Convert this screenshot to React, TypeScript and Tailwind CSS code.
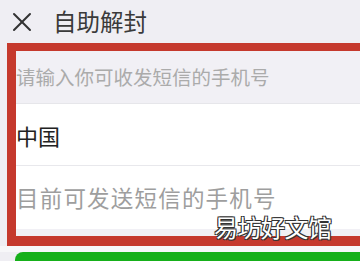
export default function App() {
  return (
    <div
      className="relative w-[360px] h-[261px] overflow-hidden bg-[#efeef3]"
      style={{ fontFamily: '"Noto Sans CJK SC", "Noto Sans", sans-serif' }}
    >
      {/* header */}
      <div className="flex items-center h-[43px]">
        <svg className="ml-[12px] w-[20px] h-[20px]" viewBox="0 0 20 20" fill="none" stroke="#333" strokeWidth="2" strokeLinecap="round">
          <line x1="2" y1="2" x2="18" y2="18" />
          <line x1="18" y1="2" x2="2" y2="18" />
        </svg>
        <span className="ml-[21px] text-[23.5px] leading-none text-[#3a3a3a]">自助解封</span>
      </div>

      {/* highlighted form */}
      <div className="ml-[7px] w-[370px] border-l-[9px] border-t-[8px] border-b-[10px] border-[#c5392d] bg-[#f1f0f5]">
        <div className="h-[52px] flex items-center">
          <span className="text-[19.5px] leading-none text-[#ababab]">请输入你可收发短信的手机号</span>
        </div>
        <div className="bg-white border-t border-[#e6e6ea]">
          <div className="h-[62px] flex items-center border-b border-[#e8e8ec]">
            <span className="text-[22px] leading-none text-[#222]">中国</span>
          </div>
          <div className="h-[63px] flex items-center">
            <span className="text-[22.5px] leading-none text-[#9e9e9e] tracking-[1.2px]">目前可发送短信的手机号</span>
          </div>
        </div>
        <div className="h-[7px]" />
      </div>

      <div className="h-[6px] bg-[#f7f7f9]" />
      <div className="ml-[15px] w-[360px] h-[20px] rounded-[8px] bg-[#16b01a]" />

      {/* watermark */}
      <span
        className="absolute left-[214px] top-[215px] text-[24px] leading-none text-white tracking-[-0.5px]"
        style={{ textShadow: '1px 1px 0 #333, -1px -1px 0 #333, 1px -1px 0 #333, -1px 1px 0 #333' }}
      >
        易坊好文馆
      </span>
    </div>
  );
}
